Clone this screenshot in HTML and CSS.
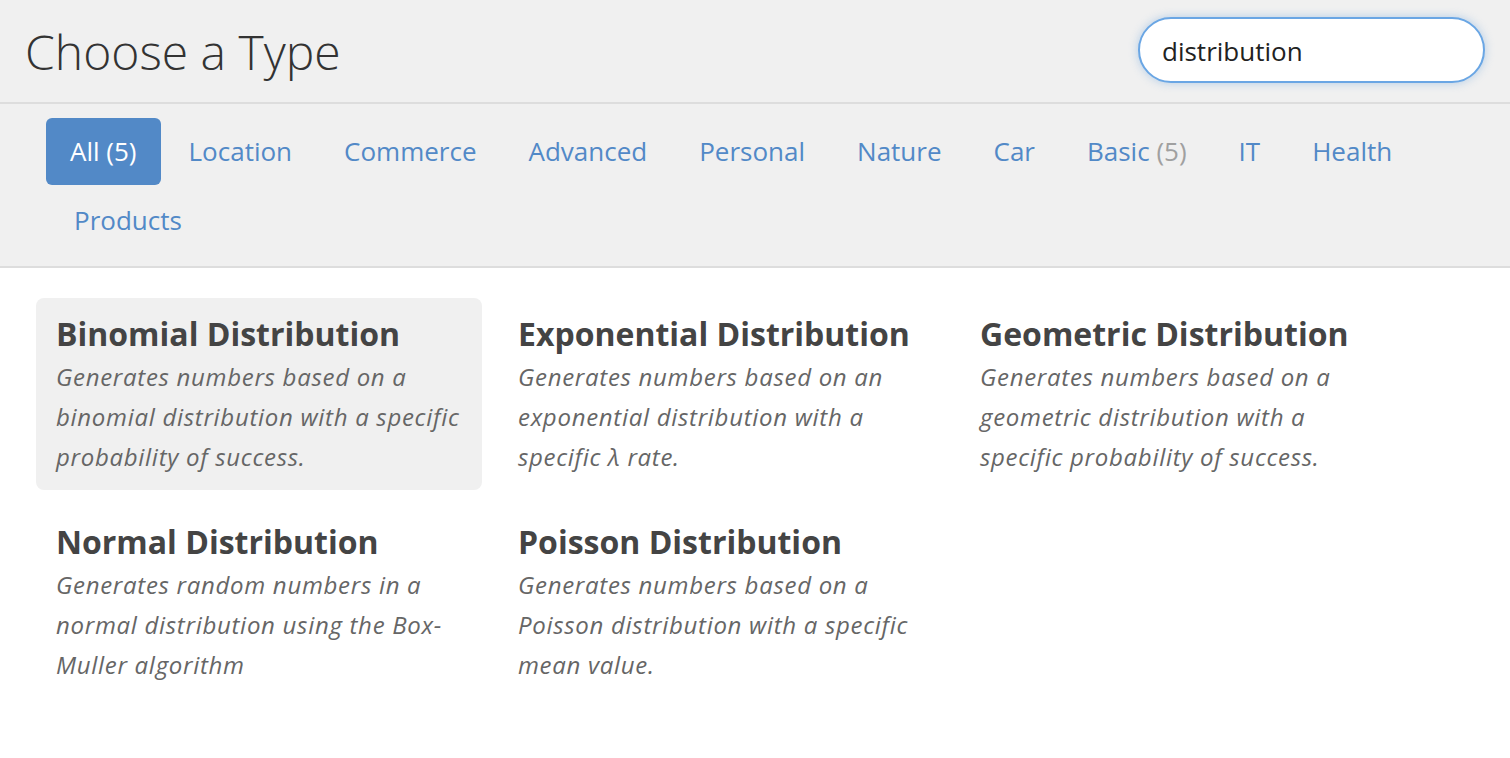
FILE: index.html
```html
<!DOCTYPE html>
<html lang="en">
<head>
<meta charset="utf-8">
<title>Choose a Type</title>
<link rel="stylesheet" href="styles.css">
</head>
<body>
<header class="top">
  <h1 class="title">Choose a Type</h1>
  <input class="search" type="text" value="distribution">
</header>
<nav class="tabs">
  <a class="tab active" href="#">All (5)</a>
  <a class="tab" href="#">Location</a>
  <a class="tab" href="#">Commerce</a>
  <a class="tab" href="#">Advanced</a>
  <a class="tab" href="#">Personal</a>
  <a class="tab" href="#">Nature</a>
  <a class="tab" href="#">Car</a>
  <a class="tab" href="#">Basic <span class="count">(5)</span></a>
  <a class="tab" href="#">IT</a>
  <a class="tab" href="#">Health</a>
  <a class="tab" href="#">Products</a>
</nav>
<main class="grid">
  <div class="card hover">
    <h2 class="card-title">Binomial Distribution</h2>
    <p class="card-desc">Generates numbers based on a binomial distribution with a specific probability of success.</p>
  </div>
  <div class="card">
    <h2 class="card-title">Exponential Distribution</h2>
    <p class="card-desc">Generates numbers based on an exponential distribution with a specific λ rate.</p>
  </div>
  <div class="card">
    <h2 class="card-title">Geometric Distribution</h2>
    <p class="card-desc">Generates numbers based on a geometric distribution with a specific probability of success.</p>
  </div>
  <div class="card">
    <h2 class="card-title">Normal Distribution</h2>
    <p class="card-desc">Generates random numbers in a normal distribution using the Box-Muller algorithm</p>
  </div>
  <div class="card">
    <h2 class="card-title">Poisson Distribution</h2>
    <p class="card-desc">Generates numbers based on a Poisson distribution with a specific mean value.</p>
  </div>
</main>
</body>
</html>
```
FILE: styles.css
```css
* { box-sizing: border-box; }
html, body {
  margin: 0;
  padding: 0;
  background: #fff;
  font-family: "Open Sans", "Noto Sans", sans-serif;
}
.top {
  display: flex;
  align-items: center;
  justify-content: space-between;
  height: 104px;
  padding: 0 25px 0 25px;
  background: #f0f0f0;
  border-bottom: 2px solid #dddddd;
}
.title {
  margin: 0;
  font-weight: 300;
  font-size: 48px;
  color: #333;
}
.search {
  width: 347px;
  height: 66px;
  padding: 3px 22px 0;
  border: 2px solid #6aa6e4;
  border-radius: 33px;
  font-family: "Open Sans", sans-serif;
  font-size: 26px;
  color: #222;
  background: #fff;
  box-shadow: 0 0 10px rgba(102, 160, 220, 0.45);
  outline: none;
  margin-bottom: 3px;
}
.tabs {
  display: flex;
  flex-wrap: wrap;
  row-gap: 2px;
  padding: 14px 46px 12px;
  background: #f0f0f0;
  border-bottom: 2px solid #dddddd;
}
.tab {
  display: block;
  padding: 0 24px;
  line-height: 67px;
  height: 67px;
  font-size: 26px;
  color: #5289c7;
  text-decoration: none;
  border-radius: 6px;
}
.tab + .tab { margin-left: 4px; }
.tab.active {
  background: #5289c7;
  color: #fff;
}
.count { color: #a0a0a0; }
.grid {
  display: grid;
  grid-template-columns: repeat(3, 446px);
  gap: 16px;
  padding: 30px 36px;
}
.card {
  padding: 14px 20px 13px;
  border-radius: 8px;
}
.card.hover { background: #f0f0f0; }
.card-title {
  margin: 0;
  font-size: 32px;
  line-height: 43px;
  font-weight: 700;
  color: #444;
}
.card-desc {
  margin: 2px 0 0;
  font-size: 24px;
  line-height: 40px;
  font-style: italic;
  letter-spacing: 0.7px;
  color: #666;
}
```
